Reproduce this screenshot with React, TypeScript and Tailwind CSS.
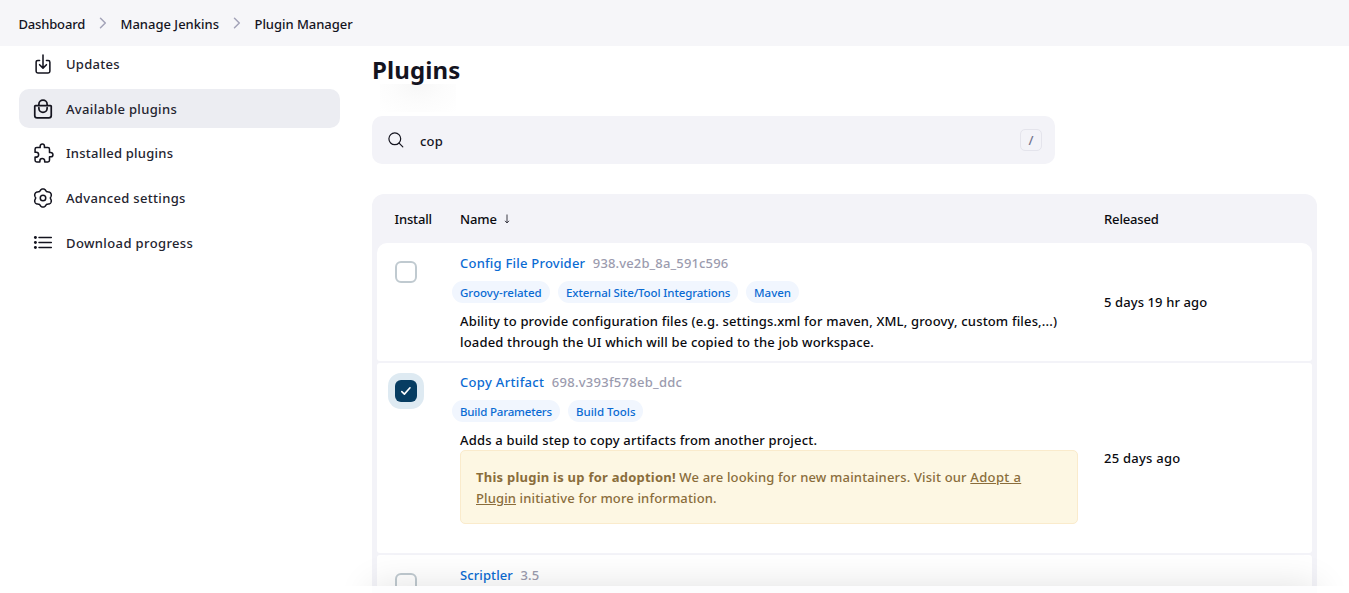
import React from "react";

const ICON = "shrink-0 fill-none stroke-[#14141f]";

function UpdatesIcon() {
  return (
    <svg viewBox="0 0 512 512" className={ICON + " size-[22px]"} strokeWidth="36" strokeLinecap="round" strokeLinejoin="round">
      <path d="M336 176h40a40 40 0 0140 40v208a40 40 0 01-40 40H136a40 40 0 01-40-40V216a40 40 0 0140-40h40" />
      <path d="M176 272l80 80 80-80M256 48v288" />
    </svg>
  );
}

function BagIcon() {
  return (
    <svg viewBox="0 0 512 512" className={ICON + " size-[22px]"} strokeWidth="40" strokeLinecap="round" strokeLinejoin="round">
      <path d="M80 176a16 16 0 00-16 16v216c0 30.24 25.76 56 56 56h272c30.24 0 56-24.51 56-54.75V192a16 16 0 00-16-16zM160 176v-32a96 96 0 0196-96h0a96 96 0 0196 96v32" />
      <path d="M160 224v16a96 96 0 0096 96h0a96 96 0 0096-96v-16" />
    </svg>
  );
}

function PuzzleIcon() {
  return (
    <svg viewBox="0 0 512 512" className={ICON + " ml-[2px] size-[22px]"} strokeWidth="36" strokeLinejoin="round">
      <path d="M413.66 246.1H386a2 2 0 01-2-2v-77.24A38.86 38.86 0 00345.14 128H267.9a2 2 0 01-2-2V98.34c0-27.14-21.5-49.86-48.64-50.33a49.53 49.53 0 00-50.4 49.51V126a2 2 0 01-2 2H87.62A39.74 39.74 0 0048 167.62V238a2 2 0 002 2h26.91c29.37 0 53.68 25.48 54.09 54.85.42 29.87-23.51 57.15-53.29 57.15H50a2 2 0 00-2 2v70.38A39.74 39.74 0 0087.62 464H158a2 2 0 002-2v-20.93c0-30.28 24.75-56.35 55-57.06 30.1-.7 57 20.31 57 50.28V462a2 2 0 002 2h71.14A38.86 38.86 0 00384 425.14v-78a2 2 0 012-2h28.48c27.63 0 49.52-22.67 49.52-50.4s-23.2-48.64-50.34-48.64z" />
    </svg>
  );
}

const gearOutline =
  Array.from({ length: 144 }, (_, i) => {
    const a = (i / 144) * Math.PI * 2;
    const r = 8.35 - 0.85 * Math.cos(6 * a) - 0.13 * Math.cos(12 * a);
    return `${i ? "L" : "M"}${(11 + r * Math.cos(a)).toFixed(2)} ${(11 + r * Math.sin(a)).toFixed(2)}`;
  }).join("") + "Z";

function GearIcon() {
  return (
    <svg viewBox="0 0 22 22" className={ICON + " size-[22px]"} strokeWidth="1.5" strokeLinejoin="round">
      <path d={gearOutline} />
      <circle cx="11" cy="11" r="2.75" />
    </svg>
  );
}

function ListIcon() {
  return (
    <svg viewBox="0 0 22 22" className={ICON + " size-[22px]"} strokeWidth="1.5" strokeLinecap="round">
      <path d="M7 5.5h12.3M7 10.5h12.3M7 15.5h12.3" />
      <g className="fill-[#14141f] stroke-none">
        <circle cx="3.4" cy="5.5" r="1.45" />
        <circle cx="3.4" cy="10.5" r="1.45" />
        <circle cx="3.4" cy="15.5" r="1.45" />
      </g>
    </svg>
  );
}

function Chevron() {
  return (
    <svg viewBox="0 0 8 12" className="mb-[2px] h-3 w-2 shrink-0 fill-none stroke-[#a3a3b8]" strokeWidth="1.5" strokeLinecap="round" strokeLinejoin="round">
      <path d="M1.5 1.2L6.3 6L1.5 10.8" />
    </svg>
  );
}

function NavItem({ icon, label, tracking, active = false }: { icon: React.ReactNode; label: string; tracking: string; active?: boolean }) {
  return (
    <a className={"flex h-[38.67px] items-center rounded-[10px] pl-3 text-[#24242f] " + (active ? "bg-[#ecedf2]" : "")}>
      <span className="flex w-6 justify-center">{icon}</span>
      <span className={"ml-[11px] pt-[0.8px] whitespace-nowrap " + tracking}>{label}</span>
    </a>
  );
}

function Checkbox({ checked = false }: { checked?: boolean }) {
  if (checked) {
    return (
      <span className="flex size-[22px] items-center justify-center rounded-[6px] bg-[#073d62] shadow-[0_0_0_7px_#deeaf2]">
        <svg viewBox="0 0 12 10" className="h-[10px] w-3 fill-none stroke-white" strokeWidth="1.6" strokeLinecap="round" strokeLinejoin="round">
          <path d="M1.8 5.6L4.4 8.1L10 1.8" />
        </svg>
      </span>
    );
  }
  return <span className="block size-[22px] rounded-[6px] border-2 border-[#c0cad0] bg-white" />;
}

function Title({ name, version, nameTracking, versionTracking }: { name: string; version: string; nameTracking: string; versionTracking: string }) {
  return (
    <div className="flex h-[21px] whitespace-nowrap">
      <a className={"text-[#0b6bd3] " + nameTracking}>{name}</a>
      <span className={"ml-[7.5px] text-[#9b9bae] " + versionTracking}>{version}</span>
    </div>
  );
}

function Tag({ label, className }: { label: string; className: string }) {
  return (
    <a className={"h-[22px] rounded-full bg-[#f1f6fe] pl-2 text-[11.5px] leading-[23px] whitespace-nowrap text-[#0b6bd3] " + className}>
      {label}
    </a>
  );
}

export default function App() {
  return (
    <div className="relative flex h-[593px] w-[1349px] flex-col overflow-hidden bg-white text-[13px] leading-[21px] font-medium text-[#14141f] [font-family:'Noto_Sans','Open_Sans',sans-serif]">
      <header className="flex h-[46px] shrink-0 items-center bg-[#f6f6f9] pt-[2px] pl-[18.5px] whitespace-nowrap">
        <span className="w-[80px] tracking-[-0.17px]">Dashboard</span>
        <Chevron />
        <span className="ml-[14px] w-[112px]">Manage Jenkins</span>
        <Chevron />
        <span className="ml-[14px] tracking-[-0.04px]">Plugin Manager</span>
      </header>

      <div className="flex h-[540px] shrink-0 overflow-hidden">
        <nav className="-mt-[1.3px] ml-[19px] flex w-[321px] shrink-0 flex-col gap-[6px]">
          <NavItem icon={<UpdatesIcon />} label="Updates" tracking="tracking-[0.26px]" />
          <NavItem active icon={<BagIcon />} label="Available plugins" tracking="tracking-[0.33px]" />
          <NavItem icon={<PuzzleIcon />} label="Installed plugins" tracking="tracking-[0.24px]" />
          <NavItem icon={<GearIcon />} label="Advanced settings" tracking="tracking-[0.33px]" />
          <NavItem icon={<ListIcon />} label="Download progress" tracking="tracking-[0.38px]" />
        </nav>

        <main className="ml-8 flex w-[945px] shrink-0 flex-col">
          <div className="h-[70px] shrink-0">
            <h1 className="h-[38px] text-[24px] leading-[48px] font-bold tracking-[0.1px]">Plugins</h1>
            <div className="ml-[8px] h-[28px] w-[76px] bg-[radial-gradient(ellipse_at_50%_0%,#f7f7f7_0%,#fcfcfc_50%,#ffffff_100%)]" />
          </div>

          <div className="flex h-12 w-[683px] shrink-0 items-center rounded-[10px] bg-[#f3f3f8] pr-[13px] pl-4">
            <svg viewBox="0 0 16 16" className="size-4 fill-none stroke-[#14141f]" strokeWidth="1.2" strokeLinecap="round">
              <circle cx="6.8" cy="6.8" r="5.9" />
              <path d="M11.1 11.1L14.8 14.8" />
            </svg>
            <span className="mt-[2px] ml-4 flex-1 tracking-[0.2px]">cop</span>
            <kbd className="flex size-[22px] items-center justify-center rounded-[5px] border border-[#e4e4ec] text-[13px] text-[#73738c] [font-family:'Noto_Sans',sans-serif]">/</kbd>
          </div>

          <section className="mt-[30px] flex h-[450px] shrink-0 flex-col rounded-t-[12px] bg-[#f3f3f8] px-[5px]">
            <div className="flex h-[49px] shrink-0 items-center pt-px pl-[17.5px] tracking-[-0.15px] text-[#0a0a0f]">
              <span className="w-[65.5px]">Install</span>
              <span>Name</span>
              <svg viewBox="0 0 8 10" className="ml-[6.5px] h-[10px] w-2 fill-none stroke-[#3a3a45]" strokeWidth="1">
                <path d="M4 0.5V8.8M2 6.8L4 9L6 6.8" />
              </svg>
              <span className="ml-auto w-[208px]">Released</span>
            </div>

            <div className="flex h-[118px] shrink-0 rounded-t-[10px] rounded-b-[3px] bg-white">
              <div className="w-[83px] pt-[18px] pl-[18px]"><Checkbox /></div>
              <div className="w-[644px] pt-[10px]">
                <Title name="Config File Provider" version="938.ve2b_8a_591c596" nameTracking="tracking-[0.22px]" versionTracking="tracking-[0.14px]" />
                <div className="mt-[7px] -ml-2 flex">
                  <Tag label="Groovy-related" className="w-[98px]" />
                  <Tag label="External Site/Tool Integrations" className="ml-2 w-[180px] tracking-[-0.09px]" />
                  <Tag label="Maven" className="ml-2 w-[53px]" />
                </div>
                <p className="mt-2 whitespace-nowrap text-[#0a0a0f]">
                  <span className="tracking-[0.16px]">Ability to provide configuration files (e.g. settings.xml for maven, XML, groovy, custom files,...)</span>
                  <br />
                  <span className="tracking-[0.17px]">loaded through the UI which will be copied to the job workspace.</span>
                </p>
              </div>
              <span className="self-center tracking-[0.1px] text-[#0a0a0f]">5 days 19 hr ago</span>
            </div>

            <div className="mt-[2px] flex h-[190px] shrink-0 rounded-[3px] bg-white">
              <div className="w-[83px] pt-[17px] pl-[18px]"><Checkbox checked /></div>
              <div className="w-[644px] pt-[9px]">
                <Title name="Copy Artifact" version="698.v393f578eb_ddc" nameTracking="tracking-[0.32px]" versionTracking="tracking-[0.26px]" />
                <div className="mt-[7px] -ml-2 flex">
                  <Tag label="Build Parameters" className="w-[108px] tracking-[-0.18px]" />
                  <Tag label="Build Tools" className="ml-2 w-[75px]" />
                </div>
                <p className="mt-2 h-5 tracking-[0.18px] whitespace-nowrap text-[#0a0a0f]">Adds a build step to copy artifacts from another project.</p>
                <div className="h-[74px] w-[618px] rounded-[5px] border border-[#faebcc] bg-[#fdf7e3] px-[15px] pt-4 whitespace-nowrap text-[#8a6d3b]">
                  <b className="tracking-[0.24px]">This plugin is up for adoption!</b>{" "}
                  <span className="tracking-[0.17px]">We are looking for new maintainers. Visit our </span>
                  <a className="tracking-[0.36px] underline">Adopt a</a>
                  <br />
                  <a className="tracking-[0.12px] underline">Plugin</a>
                  <span className="tracking-[0.14px]"> initiative for more information.</span>
                </div>
              </div>
              <span className="self-center tracking-[0.24px] text-[#0a0a0f]">25 days ago</span>
            </div>

            <div className="mt-[2px] flex h-[100px] shrink-0 rounded-[3px] bg-white">
              <div className="w-[83px] pt-[18px] pl-[18px]"><Checkbox /></div>
              <div className="pt-[10px]">
                <Title name="Scriptler" version="3.5" nameTracking="tracking-[0.1px]" versionTracking="tracking-[0.1px]" />
              </div>
            </div>
          </section>
        </main>
      </div>

      <div className="pointer-events-none absolute top-[540px] left-0 h-[46px] w-full overflow-hidden">
        <div className="absolute top-[46px] left-[372px] h-[60px] w-[945px] shadow-[0_0_36px_rgba(0,0,0,0.12)]" />
      </div>
      <div className="h-[7px] w-full bg-white pl-[372px]">
        <div className="h-full w-[945px] bg-[#fdfdfe]" />
      </div>
    </div>
  );
}
